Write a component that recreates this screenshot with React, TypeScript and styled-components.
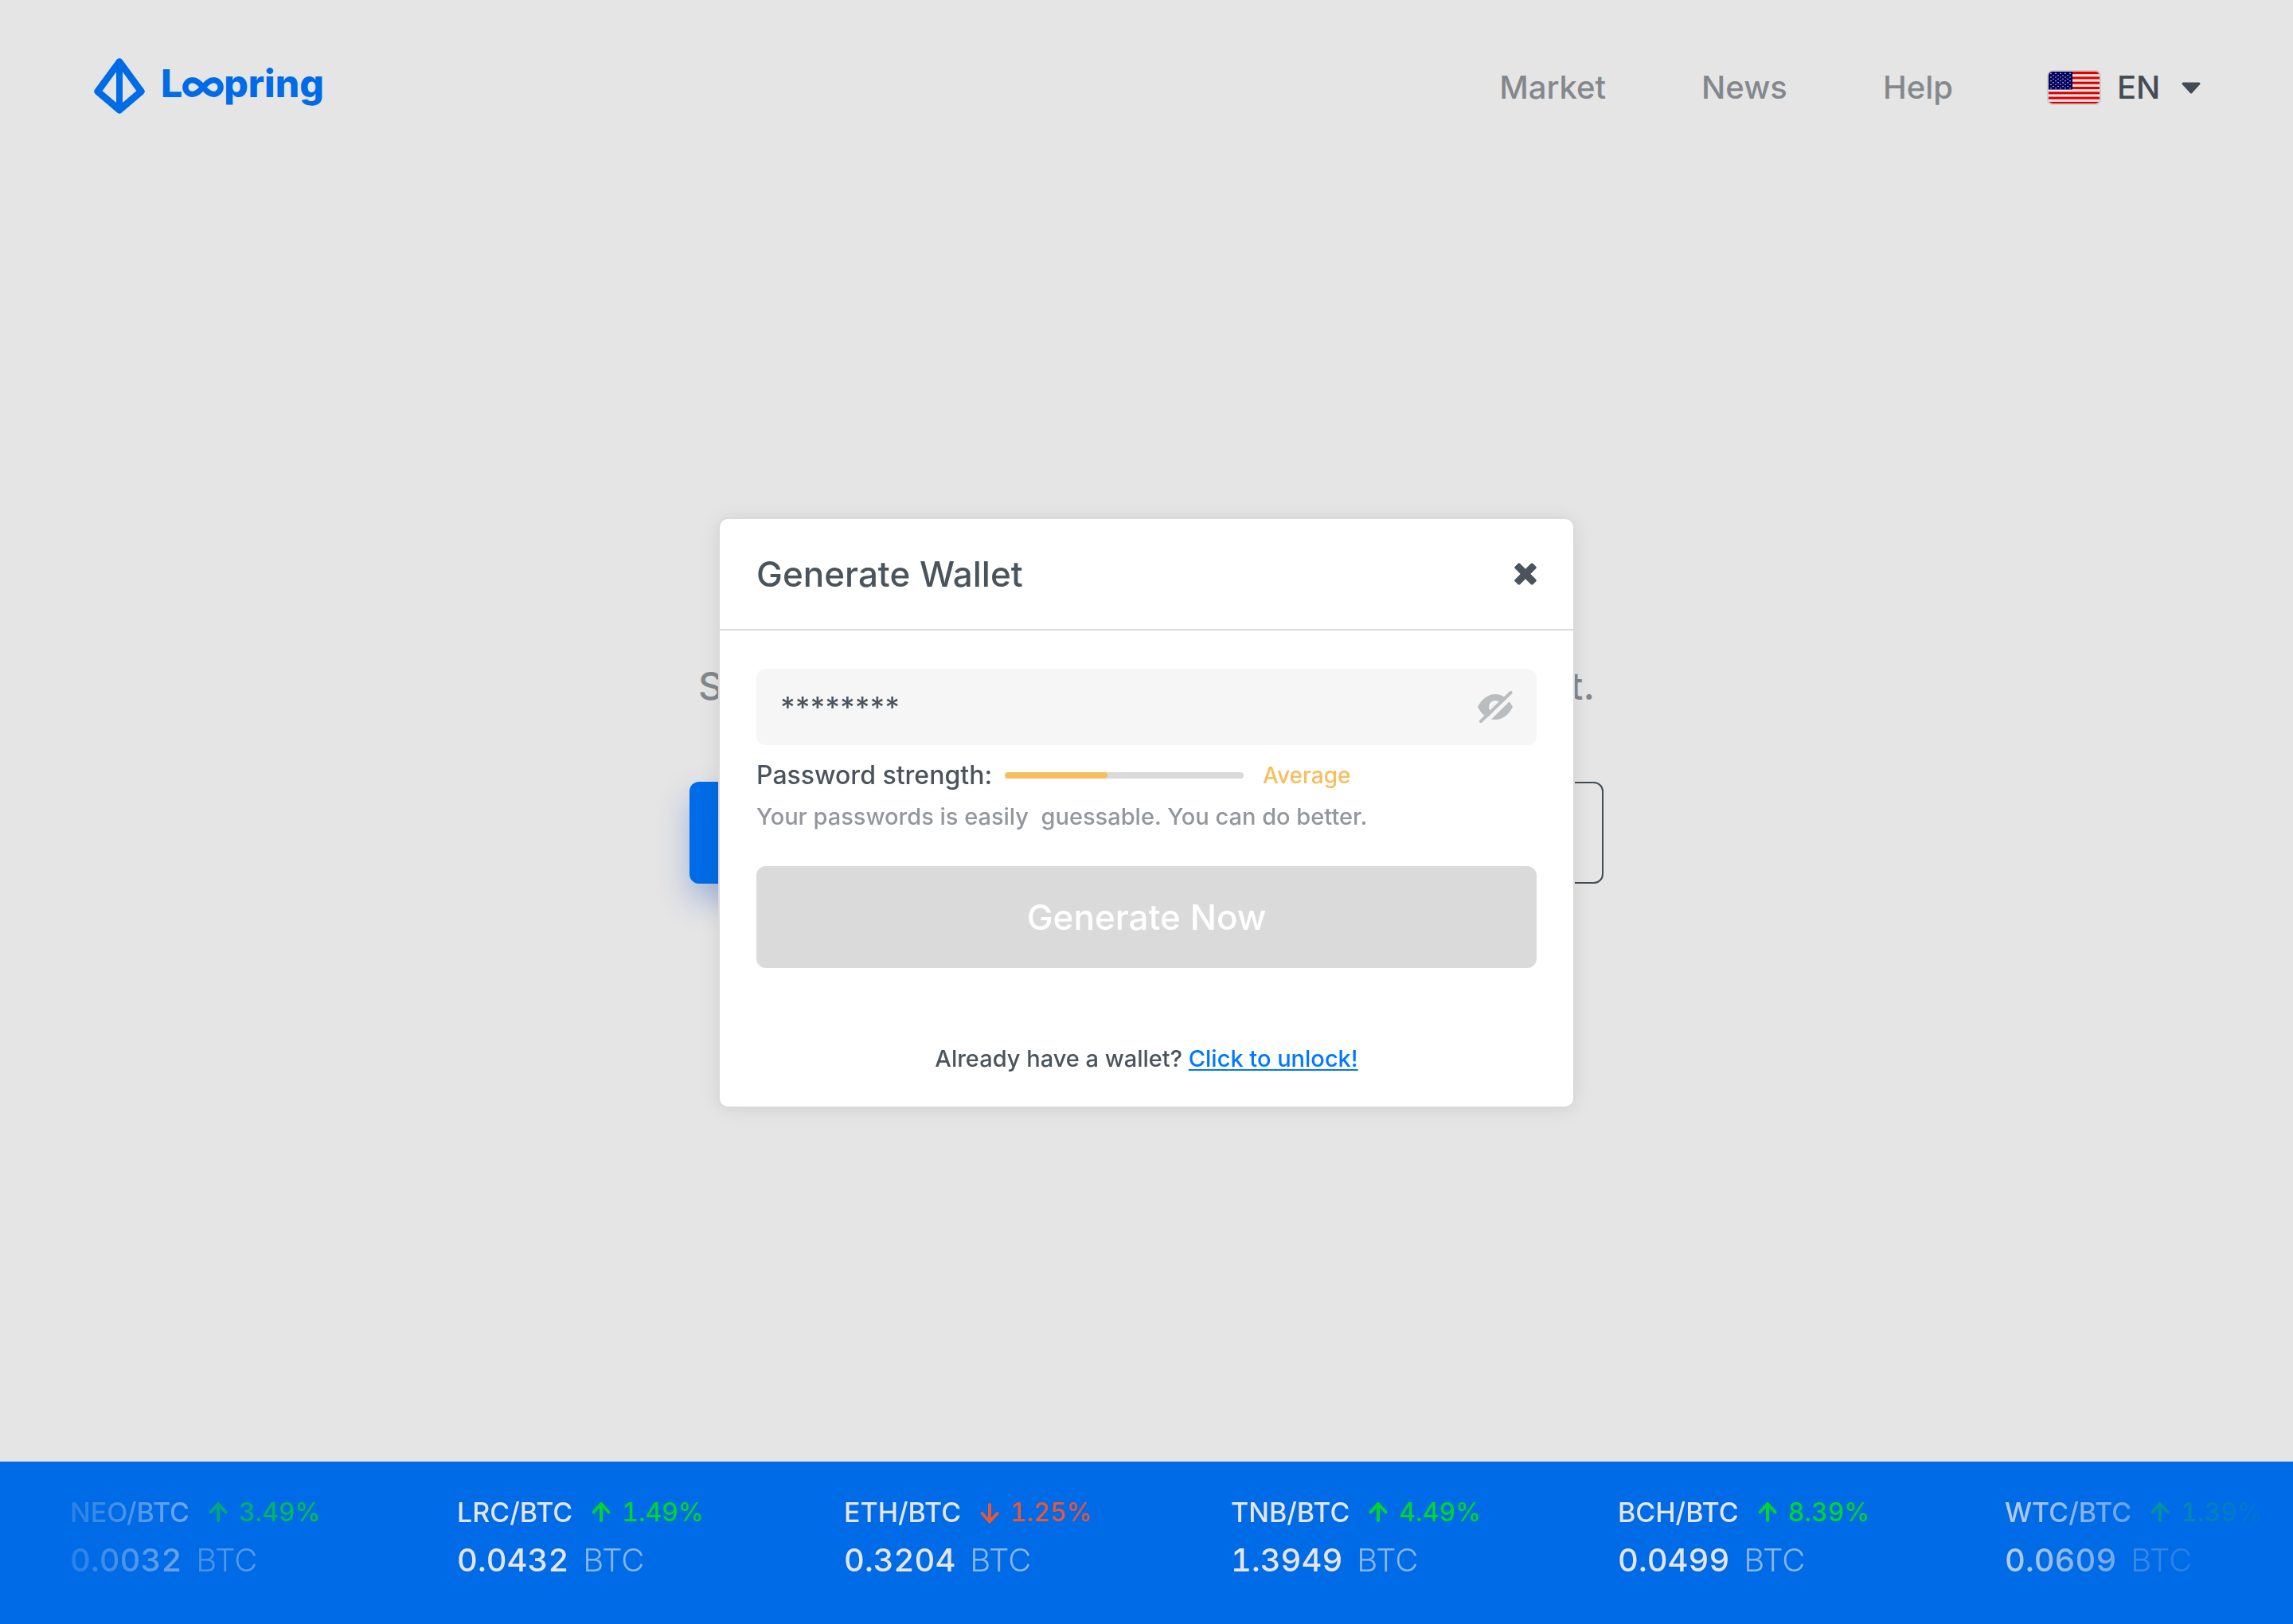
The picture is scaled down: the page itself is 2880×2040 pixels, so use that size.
import React, { useState } from 'react';
import styled, { createGlobalStyle } from 'styled-components';

const color = {
  page: '#e5e5e5',
  brand: '#006be6',
  link: '#0077ff',
  ink: '#4b545d',
  inkDim: '#434b53',
  muted: '#84888d',
  hint: '#93979c',
  line: '#dadada',
  field: '#f6f6f6',
  warn: '#f8bd5c',
  up: '#00d72b',
  down: '#e6573b',
};

const GlobalStyle = createGlobalStyle`
  *, *::before, *::after { box-sizing: border-box; }
  body {
    margin: 0;
    background: ${color.page};
    font-family: Inter, "Liberation Sans", sans-serif;
    font-weight: 500;
  }
  button, input, select { font: inherit; color: inherit; margin: 0; }
  svg { display: block; flex: none; }
`;

const Page = styled.div`
  min-height: 100vh;
  display: flex;
  flex-direction: column;
`;

/* ---------- header ---------- */

const Header = styled.header`
  display: flex;
  align-items: center;
  justify-content: space-between;
  height: 220px;
  padding: 0 116px 0 118px;
`;

const Brand = styled.a`
  display: flex;
  align-items: center;
  gap: 20px;
  padding-bottom: 4px;
  color: ${color.brand};
  text-decoration: none;
`;

const Wordmark = styled.span`
  display: flex;
  align-items: baseline;
  padding-bottom: 6px;
  font-size: 48px;
  line-height: 48px;
  font-weight: 800;
`;

const Nav = styled.nav`
  display: flex;
  align-items: center;
  gap: 120px;
  font-size: 40px;
  line-height: 48px;
`;

const NavLink = styled.a`
  color: ${color.muted};
  text-decoration: none;
`;

const Language = styled.label`
  display: flex;
  align-items: center;
  color: ${color.inkDim};
`;

const FlagFrame = styled.span`
  overflow: hidden;
  border-radius: 5px;
  box-shadow: 0 0 0 2px #cdcdcd;
`;

const LanguageSelect = styled.select`
  appearance: none;
  border: 0;
  padding: 0;
  margin: 0 26px 0 22px;
  background: none;
  line-height: 48px;
`;

/* ---------- hero ---------- */

const Main = styled.main`
  flex: 1;
  display: flex;
  flex-direction: column;
  align-items: center;
  justify-content: center;
  gap: 88px;
  padding-bottom: 116px;
`;

const Tagline = styled.p`
  display: flex;
  justify-content: space-between;
  width: 1126px;
  margin: 0;
  font-size: 48px;
  line-height: 64px;
  color: ${color.muted};
`;

const Actions = styled.div`
  display: grid;
  grid-template-columns: 1fr 1fr;
  gap: 40px;
  width: 1148px;
`;

const ActionButton = styled.button<{ $primary?: boolean }>`
  height: 128px;
  border-radius: 12px;
  border: ${(p) => (p.$primary ? '0' : `2px solid ${color.inkDim}`)};
  background: ${(p) => (p.$primary ? color.brand : 'transparent')};
  box-shadow: ${(p) => (p.$primary ? '0 20px 40px rgba(0, 62, 190, 0.3)' : 'none')};
`;

/* ---------- dialog ---------- */

const Overlay = styled.div`
  position: fixed;
  inset: 0;
  display: flex;
  align-items: center;
  justify-content: center;
  padding-top: 2px;
`;

const Dialog = styled.section`
  width: 1072px;
  border-radius: 10px;
  background: #fff;
  color: ${color.ink};
  box-shadow: 0 0 0 2px ${color.line}, 0 2px 26px rgba(0, 0, 0, 0.1);
`;

const DialogHeader = styled.header`
  display: flex;
  align-items: center;
  justify-content: space-between;
  height: 140px;
  padding: 0 46px;
  border-bottom: 2px solid ${color.line};
`;

const DialogTitle = styled.h1`
  margin: 0;
  font-size: 44px;
  line-height: 56px;
  font-weight: 500;
`;

const IconButton = styled.button`
  display: flex;
  padding: 0;
  border: 0;
  background: none;
  color: ${color.ink};
  cursor: pointer;
`;

const Form = styled.form`
  display: flex;
  flex-direction: column;
  padding: 48px 46px 40px;
`;

const Field = styled.div`
  display: flex;
  align-items: center;
  height: 96px;
  padding: 0 30px;
  border-radius: 12px;
  background: ${color.field};
`;

const PasswordInput = styled.input`
  flex: 1;
  min-width: 0;
  padding: 0;
  border: 0;
  outline: 0;
  background: none;
  font-size: 36px;
  line-height: 48px;
`;

const Strength = styled.div`
  display: flex;
  align-items: center;
  margin-top: 14px;
  font-size: 32px;
  line-height: 48px;
`;

const Meter = styled.div`
  width: 300px;
  height: 8px;
  margin: 0 24px 0 16px;
  overflow: hidden;
  border-radius: 4px;
  background: ${color.line};
`;

const MeterFill = styled.div`
  height: 100%;
  border-radius: 4px;
  background: ${color.warn};
`;

const Rating = styled.span`
  font-size: 28px;
  color: ${color.warn};
`;

const Hint = styled.p`
  margin: 8px 0 42px;
  font-size: 29px;
  line-height: 40px;
  white-space: pre-wrap;
  color: ${color.hint};
`;

const SubmitButton = styled.button`
  height: 128px;
  border: 0;
  border-radius: 12px;
  background: ${color.line};
  color: #fff;
  font-size: 44px;
`;

const Footnote = styled.p`
  margin: 94px 0 0;
  text-align: center;
  font-size: 29px;
  line-height: 40px;
`;

const UnlockLink = styled.a`
  color: ${color.link};
  text-decoration: underline;
  text-decoration-thickness: 2px;
  text-underline-offset: 3px;
  text-decoration-skip-ink: none;
`;

/* ---------- ticker ---------- */

const TickerBar = styled.footer`
  height: 204px;
  overflow: hidden;
  background: ${color.brand};
`;

const TickerList = styled.ul`
  display: grid;
  grid-template-columns: repeat(5, 1fr) 362px;
  height: 100%;
  margin: 0;
  padding: 44px 0 0 88px;
  list-style: none;
  color: ${color.page};
  white-space: nowrap;
  font-variant-numeric: tabular-nums;
  mask-image: linear-gradient(
    to right,
    transparent 0,
    #000 480px,
    #000 calc(100% - 450px),
    transparent 100%
  );
`;

const PairRow = styled.div`
  display: flex;
  align-items: center;
  font-size: 34px;
  line-height: 40px;
`;

const Change = styled.span<{ $down?: boolean }>`
  display: flex;
  align-items: center;
  gap: 14px;
  margin-left: 24px;
  font-size: 32px;
  color: ${(p) => (p.$down ? color.down : color.up)};
`;

const PriceRow = styled.div`
  display: flex;
  gap: 18px;
  margin-top: 16px;
  font-size: 40px;
  line-height: 48px;
`;

const Unit = styled.span`
  font-weight: 300;
  opacity: 0.6;
`;

/* ---------- drawings ---------- */

const LogoIcon = () => (
  <svg width="64" height="70" viewBox="54 70 192 209" fill="none" stroke="currentColor" strokeLinejoin="round" aria-hidden="true">
    <path d="M150 83 68 195l82 70 82-70z" strokeWidth="26" />
    <path d="M150 83v182" strokeWidth="24" />
  </svg>
);

const LogoLoops = () => (
  <svg width="52" height="25" viewBox="390 137 156 75" fill="none" stroke="currentColor" strokeWidth="22" aria-hidden="true">
    <path d="M468 174.500C455 160 445 148 428 148a26.500 26.500 0 0 0 0 53c17 0 27-12 40-26.500C481 160 491 148 508 148a26.500 26.500 0 0 1 0 53c-17 0-27-12-40-26.500z" />
  </svg>
);

const starRows = Array.from({ length: 9 }, (_, r) =>
  Array.from({ length: r % 2 ? 4 : 5 }, (_, c) => ({
    x: 3 + c * 6 + (r % 2 ? 3 : 0),
    y: 2.4 + r * 2.3,
  })),
).flat();

const UsFlag = () => (
  <svg width="64" height="40" viewBox="0 0 64 40" aria-hidden="true">
    <rect width="64" height="40" fill="#e9e9e9" />
    {[0, 2, 4, 6, 8, 10, 12].map((n) => (
      <rect key={n} y={(n * 41) / 13} width="64" height={41 / 13} fill="#df0000" />
    ))}
    <rect width="30" height="22.500" fill="#00005f" />
    {starRows.map((s) => (
      <circle key={`${s.x}-${s.y}`} cx={s.x} cy={s.y} r="0.8" fill="#d5d5e2" />
    ))}
  </svg>
);

const Caret = () => (
  <svg width="24" height="15" viewBox="0 0 24 15" fill="currentColor" stroke="currentColor" strokeWidth="3" strokeLinejoin="round" aria-hidden="true">
    <path d="M2 2h20L12 13z" />
  </svg>
);

const CloseIcon = () => (
  <svg width="28" height="28" viewBox="0 0 28 28" fill="currentColor" aria-hidden="true">
    <g transform="rotate(45 14 14)">
      <rect x="9.500" y="-2" width="9" height="32" rx="2" />
      <rect x="-2" y="9.500" width="32" height="9" rx="2" />
    </g>
  </svg>
);

const HiddenEye = () => (
  <svg width="44" height="40" viewBox="0 0 44 40" fill="#b9bdc0" aria-hidden="true">
    <mask id="eye-gap">
      <rect width="44" height="40" fill="#fff" />
      <path d="M6.500 42.500 45.500 4" stroke="#000" strokeWidth="5" />
    </mask>
    <g mask="url(#eye-gap)">
      <path
        fillRule="evenodd"
        d="M0 20C5 10 13 4 22 4s17 6 22 16c-5 10-13 16-22 16S5 30 0 20zm22-8a8 8 0 1 0 0 16c0-4 4-8 8-8a8 8 0 0 0-8-8z"
      />
    </g>
    <path d="M4 38 41.500 2" stroke="#b9bdc0" strokeWidth="4" strokeLinecap="round" />
  </svg>
);

const Arrow = ({ down }: { down?: boolean }) => (
  <svg width="24" height="28" viewBox="0 0 24 28" fill="none" stroke="currentColor" strokeWidth="4" strokeLinecap="round" strokeLinejoin="round" aria-hidden="true">
    {down ? <path d="M12 4v21M2.500 15 12 25.500 21.500 15" /> : <path d="M12 24V3M2.500 13.500 12 3l9.500 10.500" />}
  </svg>
);

/* ---------- data ---------- */

const tickers = [
  { pair: 'NEO/BTC', change: '3.49%', price: '0.0032' },
  { pair: 'LRC/BTC', change: '1.49%', price: '0.0432' },
  { pair: 'ETH/BTC', change: '1.25%', price: '0.3204', down: true },
  { pair: 'TNB/BTC', change: '4.49%', price: '1.3949' },
  { pair: 'BCH/BTC', change: '8.39%', price: '0.0499' },
  { pair: 'WTC/BTC', change: '1.39%', price: '0.0609' },
];

export default function App() {
  const [password, setPassword] = useState('********');
  const strength = 43;

  return (
    <>
      <GlobalStyle />
      <Page>
        <Header>
          <Brand href="#" aria-label="Loopring">
            <LogoIcon />
            <Wordmark>
              <span>L</span>
              <LogoLoops />
              <span>pring</span>
            </Wordmark>
          </Brand>
          <Nav>
            <NavLink href="#market">Market</NavLink>
            <NavLink href="#news">News</NavLink>
            <NavLink href="#help">Help</NavLink>
            <Language>
              <FlagFrame>
                <UsFlag />
              </FlagFrame>
              <LanguageSelect aria-label="Language" defaultValue="EN">
                <option>EN</option>
              </LanguageSelect>
              <Caret />
            </Language>
          </Nav>
        </Header>

        <Main>
          <Tagline>
            <span>S</span>
            <span>t.</span>
          </Tagline>
          <Actions>
            <ActionButton $primary aria-label="Generate Wallet" />
            <ActionButton aria-label="Unlock Wallet" />
          </Actions>
        </Main>

        <TickerBar>
          <TickerList>
            {tickers.map((t) => (
              <li key={t.pair}>
                <PairRow>
                  {t.pair}
                  <Change $down={t.down}>
                    <Arrow down={t.down} />
                    {t.change}
                  </Change>
                </PairRow>
                <PriceRow>
                  <span>{t.price}</span>
                  <Unit>BTC</Unit>
                </PriceRow>
              </li>
            ))}
          </TickerList>
        </TickerBar>
      </Page>

      <Overlay>
        <Dialog role="dialog" aria-labelledby="dialog-title">
          <DialogHeader>
            <DialogTitle id="dialog-title">Generate Wallet</DialogTitle>
            <IconButton type="button" aria-label="Close">
              <CloseIcon />
            </IconButton>
          </DialogHeader>
          <Form onSubmit={(e) => e.preventDefault()}>
            <Field>
              <PasswordInput
                aria-label="Password"
                value={password}
                onChange={(e) => setPassword(e.target.value)}
              />
              <IconButton type="button" aria-label="Show password">
                <HiddenEye />
              </IconButton>
            </Field>
            <Strength>
              <span>Password strength:</span>
              <Meter role="meter" aria-label="Password strength" aria-valuenow={strength} aria-valuemin={0} aria-valuemax={100}>
                <MeterFill style={{ width: `${strength}%` }} />
              </Meter>
              <Rating>Average</Rating>
            </Strength>
            <Hint>{'Your passwords is easily  guessable. You can do better.'}</Hint>
            <SubmitButton type="submit">Generate Now</SubmitButton>
            <Footnote>
              Already have a wallet? <UnlockLink href="#unlock">Click to unlock!</UnlockLink>
            </Footnote>
          </Form>
        </Dialog>
      </Overlay>
    </>
  );
}
